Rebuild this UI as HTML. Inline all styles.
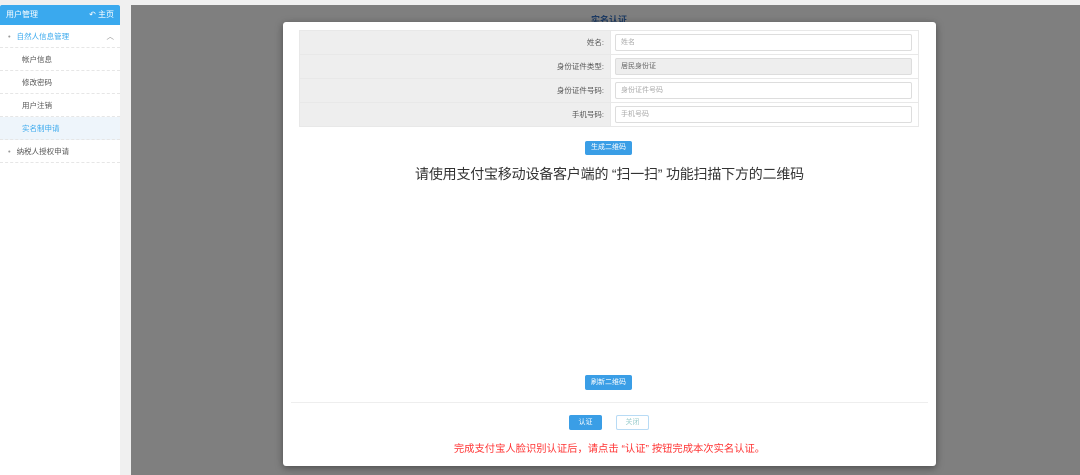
<!DOCTYPE html>
<html><head><meta charset="utf-8"><style>
*{margin:0;padding:0;box-sizing:border-box}
body{width:1080px;height:475px;background:#f0f0f0;font-family:"Liberation Sans","Noto Sans CJK SC",sans-serif;position:relative;overflow:hidden;font-size:8px;color:#555}
.side{position:absolute;left:0;top:5px;width:120px;height:470px;background:#fff}
.hd{height:20px;background:#3aa9ee;color:#fff;padding:0 6px;line-height:20px;font-size:8px;border-radius:2px 2px 0 0;display:flex;justify-content:space-between}
.it{height:23px;line-height:23px;border-bottom:1px dashed #e6e6e6;padding-left:22px;font-size:7.5px}
.lv1{padding-left:8px}
.lv1:before{content:"•";color:#999;margin-right:6px}
.ov{position:absolute;left:131px;top:5px;width:949px;height:470px;background:#7f7f7f}
.modal{position:absolute;left:283px;top:22px;width:653px;height:444px;background:#fff;border-radius:3px;box-shadow:0 2px 8px rgba(0,0,0,.4)}
table{position:absolute;left:16px;top:8px;width:620px;border-collapse:collapse}
td{height:24px;border:1px solid #e8e8e8}
td.l{background:#eee;width:311px;text-align:right;padding-right:6px;font-size:7.5px;color:#555}
td.v{padding:0 6px 0 4px}
.in{height:17px;border:1px solid #ddd;border-radius:2px;font-size:7px;color:#aaa;line-height:15px;padding-left:5px}
.btn{position:absolute;background:#3a9ee6;color:#fff;font-size:7px;text-align:center;border-radius:2px}
</style></head><body>
<div class="side">
<div class="hd"><span>用户管理</span><span>↶ 主页</span></div>
<div class="it lv1" style="color:#3aa9ee">自然人信息管理<span style="float:right;margin-right:6px;color:#999">︿</span></div>
<div class="it">帐户信息</div>
<div class="it">修改密码</div>
<div class="it">用户注销</div>
<div class="it" style="background:#eef5fb;color:#3aa9ee">实名制申请</div>
<div class="it lv1">纳税人授权申请</div>
</div>
<div class="ov"><div style="position:absolute;left:460px;top:8px;color:#1c3a63;font-size:9px;font-weight:bold">实名认证</div></div>
<div class="modal">
<table>
<tr><td class="l">姓名:</td><td class="v"><div class="in">姓名</div></td></tr>
<tr><td class="l">身份证件类型:</td><td class="v"><div class="in" style="background:#eee;color:#666">居民身份证</div></td></tr>
<tr><td class="l">身份证件号码:</td><td class="v"><div class="in">身份证件号码</div></td></tr>
<tr><td class="l">手机号码:</td><td class="v"><div class="in">手机号码</div></td></tr>
</table>
<div class="btn" style="left:302px;top:119px;width:47px;height:14px;line-height:14px">生成二维码</div>
<div style="position:absolute;left:0;width:653px;top:142px;text-align:center;font-size:14px;color:#333;letter-spacing:-0.2px">请使用支付宝移动设备客户端的 “扫一扫” 功能扫描下方的二维码</div>
<div class="btn" style="left:302px;top:353px;width:47px;height:15px;line-height:15px">刷新二维码</div>
<div style="position:absolute;left:8px;top:380px;width:637px;border-top:1px solid #eee"></div>
<div class="btn" style="left:286px;top:393px;width:33px;height:15px;line-height:15px">认证</div>
<div class="btn" style="left:333px;top:393px;width:33px;height:15px;line-height:13px;background:#fff;border:1px solid #b8dbf5;color:#9cc">关闭</div>
<div style="position:absolute;left:0;width:653px;top:418px;text-align:center;font-size:10.3px;color:#f33">完成支付宝人脸识别认证后，请点击 “认证” 按钮完成本次实名认证。</div>
</div>
</body></html>
